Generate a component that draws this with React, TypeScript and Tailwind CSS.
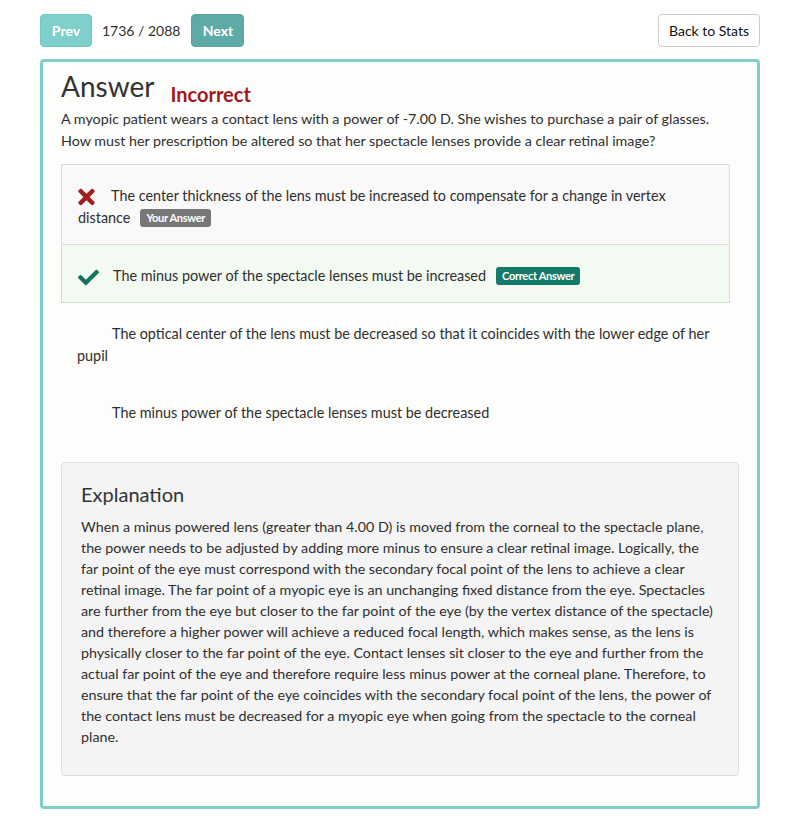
import React from 'react';
import { FaTimes, FaCheck } from 'react-icons/fa';

const options = [
  {
    id: 1,
    text: 'The center thickness of the lens must be increased to compensate for a change in vertex distance',
    status: 'wrong',
  },
  { id: 2, text: 'The minus power of the spectacle lenses must be increased', status: 'correct' },
  {
    id: 3,
    text: 'The optical center of the lens must be decreased so that it coincides with the lower edge of her pupil',
    status: 'none',
  },
  { id: 4, text: 'The minus power of the spectacle lenses must be decreased', status: 'none' },
];

// line breaks follow the original page
const explanationLines = [
  'When a minus powered lens (greater than 4.00 D) is moved from the corneal to the spectacle plane,',
  'the power needs to be adjusted by adding more minus to ensure a clear retinal image. Logically, the',
  'far point of the eye must correspond with the secondary focal point of the lens to achieve a clear',
  'retinal image. The far point of a myopic eye is an unchanging fixed distance from the eye. Spectacles',
  'are further from the eye but closer to the far point of the eye (by the vertex distance of the spectacle)',
  'and therefore a higher power will achieve a reduced focal length, which makes sense, as the lens is',
  'physically closer to the far point of the eye. Contact lenses sit closer to the eye and further from the',
  'actual far point of the eye and therefore require less minus power at the corneal plane. Therefore, to',
  'ensure that the far point of the eye coincides with the secondary focal point of the lens, the power of',
  'the contact lens must be decreased for a myopic eye when going from the spectacle to the corneal',
  'plane.',
];

export default function App() {
  return (
    <div className="min-h-[834px] bg-white px-10 pt-[14px] text-[#2f2f2f] font-['Lato','Open_Sans',sans-serif]">
      {/* Top navigation */}
      <div className="flex items-center justify-between">
        <div className="flex items-center">
          <button className="h-[33px] w-[52px] rounded-[4px] border border-[#74c8c4] bg-[#7fcfcb] text-[14px] font-bold text-white">
            Prev
          </button>
          <span className="ml-[10px] text-[14px]">1736 / 2088</span>
          <button className="ml-[11px] h-[33px] w-[53px] rounded-[4px] border border-[#58a4a1] bg-[#5eaaa7] text-[14px] font-bold text-white">
            Next
          </button>
        </div>
        <button className="h-[33px] w-[102px] rounded-[4px] border border-[#cccccc] bg-white text-[14px] text-[#111]">
          Back to Stats
        </button>
      </div>

      {/* Answer card */}
      <div className="mt-3 h-[750px] rounded-[4px] border-[3px] border-[#7ecfcc] bg-[#fdfdfc] px-[18px] pt-2">
        <h2 className="text-[28px] leading-[33px] text-[#333]">
          Answer
          <span className="relative top-[5px] ml-[16px] text-[20px] font-bold text-[#a11a1a]">Incorrect</span>
        </h2>
        <p className="mt-[2px] text-[14.3px] leading-[22px]">
          A myopic patient wears a contact lens with a power of -7.00 D. She wishes to purchase a pair of glasses.
          How must her prescription be altered so that her spectacle lenses provide a clear retinal image?
        </p>

        <ul className="mt-3 mr-[9px]">
          {options.map((opt) => (
            <li
              key={opt.id}
              className={
                opt.status === 'wrong'
                  ? 'border border-[#dddddd] bg-[#f9f9f9] pl-4 pr-4 pt-5 pb-[15px] text-[14.4px] leading-[22px]'
                  : opt.status === 'correct'
                  ? 'border border-t-0 border-[#c5e6c2] bg-[#f3faf1] pl-4 pr-4 pt-5 pb-[15px] text-[14.4px] leading-[22px]'
                  : 'pl-4 pr-4 pt-5 pb-[15px] text-[14.4px] leading-[22px]'
              }
            >
              {opt.status === 'wrong' && (
                <FaTimes className="-my-1 mr-4 inline-block h-[24px] w-[17px] align-[-4px] text-[#a31d1d]" />
              )}
              {opt.status === 'correct' && (
                <FaCheck className="-my-1 mr-[14px] inline-block align-[-3px] text-[#16735f]" size={21} />
              )}
              {opt.status === 'none' && (
                <FaCheck className="-my-1 mr-[14px] inline-block align-[-3px] text-[#fdfdfc]" size={21} />
              )}
              {opt.text}
              {opt.status === 'wrong' && (
                <span className="ml-[10px] inline-block rounded-[3px] bg-[#777777] px-[6px] text-[11px] font-bold leading-[18px] tracking-[-0.3px] text-white align-[1px]">
                  Your Answer
                </span>
              )}
              {opt.status === 'correct' && (
                <span className="ml-[10px] inline-block rounded-[3px] bg-[#167a68] px-[6px] text-[11px] font-bold leading-[18px] tracking-[-0.3px] text-white align-[1px]">
                  Correct Answer
                </span>
              )}
            </li>
          ))}
        </ul>

        {/* Explanation */}
        <div className="mt-[23px] h-[314px] rounded-[4px] border border-[#dedede] bg-[#f4f4f4] px-[19px] pt-5">
          <h3 className="text-[20px] leading-[22px] text-[#333]">Explanation</h3>
          <p className="mt-[11px] whitespace-nowrap text-[14.3px] leading-[21px]">
            {explanationLines.map((line, i) => (
              <React.Fragment key={i}>
                {line}
                {i < explanationLines.length - 1 && <br />}
              </React.Fragment>
            ))}
          </p>
        </div>
      </div>
    </div>
  );
}
